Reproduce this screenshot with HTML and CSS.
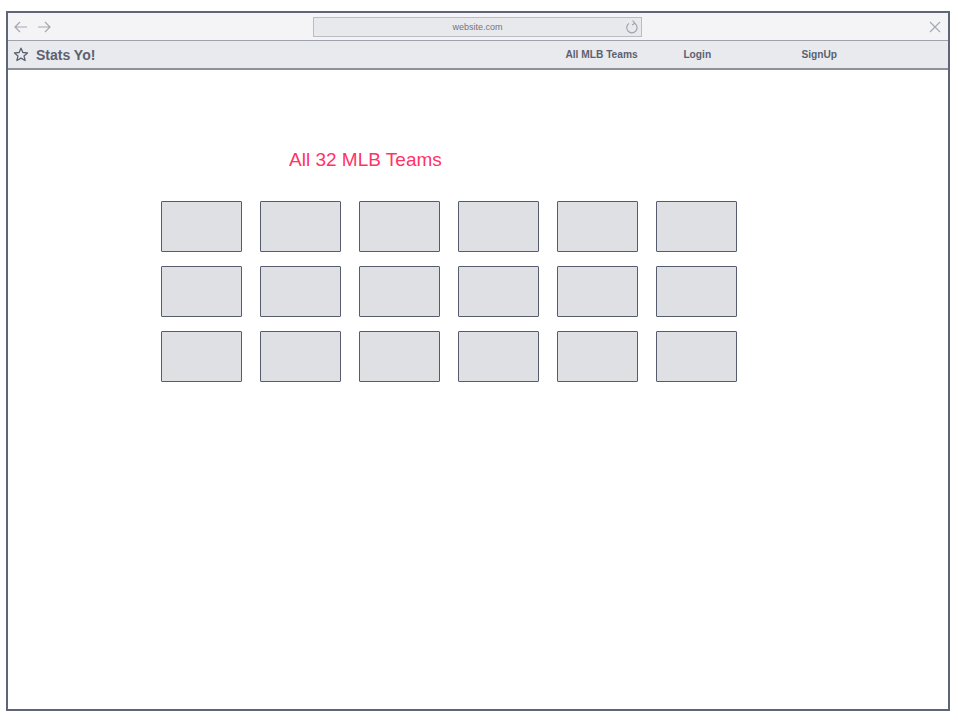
FILE: index.html
```html
<!DOCTYPE html>
<html lang="en">
<head>
  <meta charset="UTF-8">
  <meta name="viewport" content="width=device-width, initial-scale=1.0">
  <title>Stats Yo!</title>
  <link rel="stylesheet" href="styles.css">
</head>
<body>
  <div class="browser">
    <!-- browser chrome -->
    <div class="chrome">
      <div class="arrows">
        <svg width="14" height="12" viewBox="0 0 14 12"><path d="M13 6H1M6 1L1 6l5 5" fill="none" stroke="#a3a7b0" stroke-width="1.2"/></svg>
        <svg width="14" height="12" viewBox="0 0 14 12"><path d="M1 6h12M8 1l5 5-5 5" fill="none" stroke="#a3a7b0" stroke-width="1.2"/></svg>
      </div>
      <div class="url">
        <span>website.com</span>
        <svg class="reload" width="14" height="16" viewBox="0 0 14 16"><path d="M9.5 4.2A5.2 5.2 0 1 1 4 4.4" fill="none" stroke="#9a9ea8" stroke-width="1.1"/><path d="M7.5 1.5l2.3 2.6-2.6 1.9" fill="none" stroke="#9a9ea8" stroke-width="1.1"/></svg>
      </div>
      <svg class="close" width="12" height="12" viewBox="0 0 12 12"><path d="M1 1l10 10M11 1L1 11" stroke="#a3a7b0" stroke-width="1.1"/></svg>
    </div>

    <!-- site nav -->
    <div class="navbar">
      <div class="brand">
        <svg width="16" height="16" viewBox="0 0 16 16"><path d="M8 1.2l1.9 4.3 4.6.4-3.5 3 1.1 4.6L8 11.1l-4.1 2.4L5 8.9l-3.5-3 4.6-.4z" fill="none" stroke="#5b6172" stroke-width="1.3" stroke-linejoin="round"/></svg>
        <span>Stats Yo!</span>
      </div>
      <div class="links">
        <a class="teams">All MLB Teams</a>
        <a class="login">Login</a>
        <a class="signup">SignUp</a>
      </div>
    </div>

    <!-- page -->
    <div class="page">
      <p class="heading">All 32 MLB Teams</p>
      <div class="team-grid">
        <div class="team"></div><div class="team"></div><div class="team"></div>
        <div class="team"></div><div class="team"></div><div class="team"></div>
        <div class="team"></div><div class="team"></div><div class="team"></div>
        <div class="team"></div><div class="team"></div><div class="team"></div>
        <div class="team"></div><div class="team"></div><div class="team"></div>
        <div class="team"></div><div class="team"></div><div class="team"></div>
      </div>
    </div>
  </div>
</body>
</html>
```

FILE: styles.css
```css
body {
  margin: 0;
  background: #fff;
  font-family: "Liberation Sans", Arial, sans-serif;
  color: #5b6172;
}
/* browser frame */
.browser {
  margin: 11px 8px 0 6px;
  height: 696px;
  border: 2px solid #5e6577;
  display: flex;
  flex-direction: column;
}
.chrome {
  height: 27px;
  background: #f4f4f6;
  border-bottom: 1px solid #9ea2ac;
  display: flex;
  align-items: center;
  padding: 0 0 0 6px;
}
.arrows {
  display: flex;
  gap: 9px;
  width: 299px;
}
.url {
  width: 327px;
  height: 18px;
  background: #e8e9ec;
  border: 1px solid #b9bcc3;
  display: flex;
  align-items: center;
  justify-content: center;
  position: relative;
  font-size: 9px;
  color: #70757f;
}
.url .reload {
  position: absolute;
  right: 2px;
  top: 1px;
}
.close {
  margin-left: auto;
  margin-right: 7px;
}
/* nav bar */
.navbar {
  height: 27px;
  background: #e9eaee;
  border-bottom: 2px solid #8d919c;
  display: flex;
  align-items: center;
  padding-left: 5px;
}
.brand {
  display: flex;
  align-items: center;
  gap: 7px;
  font-size: 14px;
  font-weight: bold;
}
.links {
  display: flex;
  font-size: 10.2px;
  font-weight: bold;
  margin-left: 470px;
}
.links .teams { width: 118px; }
.links .login { width: 118px; }
/* content */
.page {
  flex: 1;
  padding: 79px 0 0 153px;
}
.heading {
  margin: 0 0 31px 128px;
  font-size: 19px;
  line-height: 21px;
  color: #ff3366;
}
.team-grid {
  display: grid;
  grid-template-columns: repeat(6, 81px);
  grid-auto-rows: 51px;
  column-gap: 18px;
  row-gap: 14px;
}
.team {
  background: #dfe0e4;
  border: 1.5px solid #555c6e;
  border-radius: 1px;
}
```
